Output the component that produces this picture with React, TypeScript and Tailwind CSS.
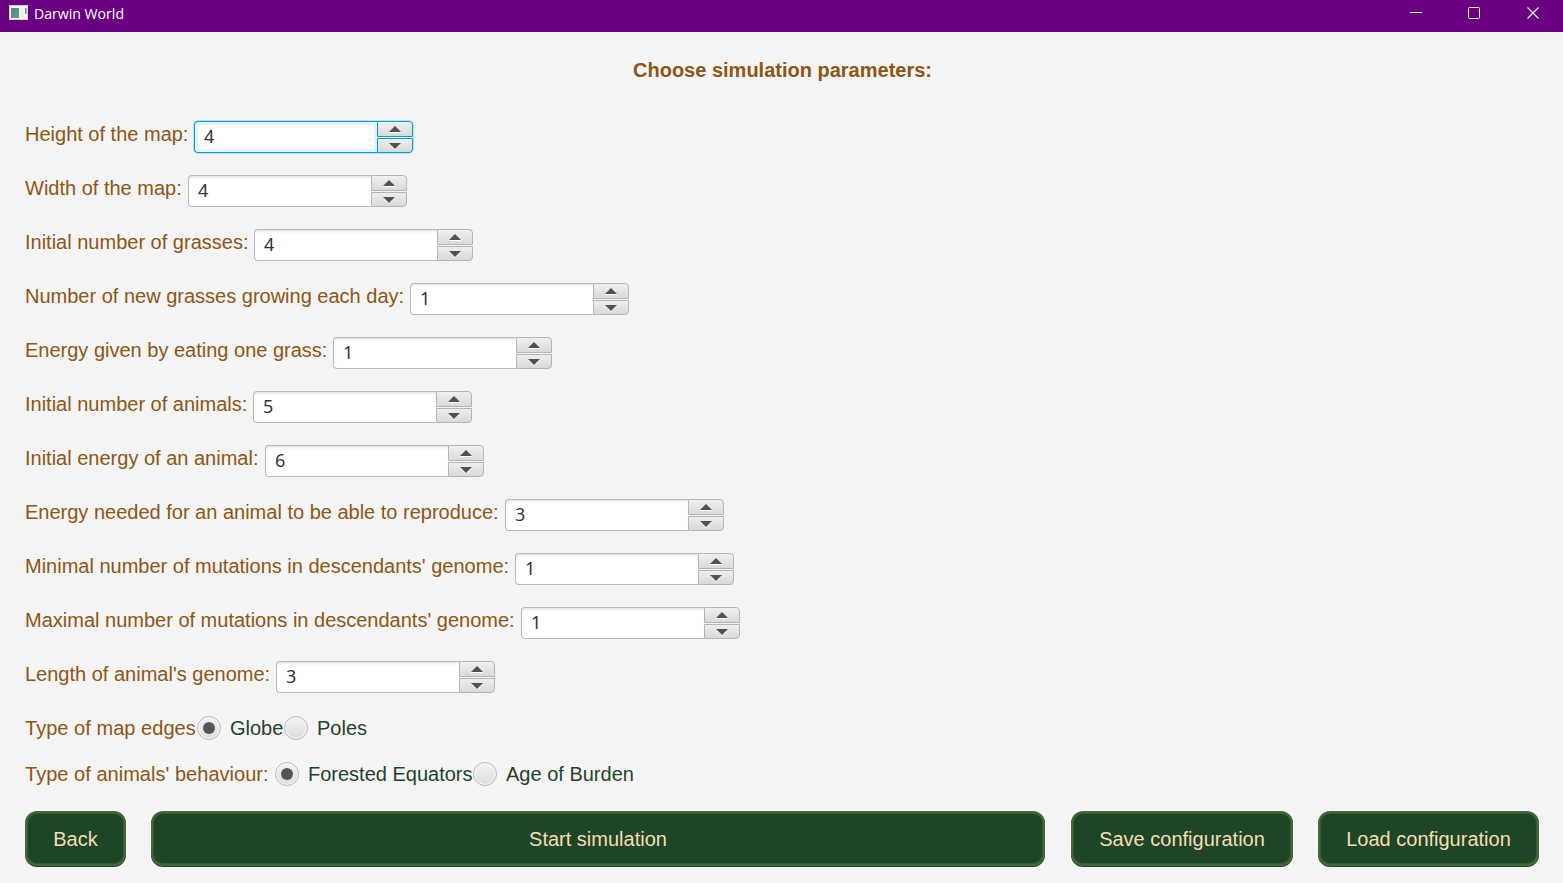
import { useState } from "react";

type Field = { label: string; value: number; width: string };

const fields: Field[] = [
  { label: "Height of the map:", value: 4, width: "w-[169px]" },
  { label: "Width of the map:", value: 4, width: "w-[163px]" },
  { label: "Initial number of grasses:", value: 4, width: "w-[229px]" },
  { label: "Number of new grasses growing each day:", value: 1, width: "w-[385px]" },
  { label: "Energy given by eating one grass:", value: 1, width: "w-[308px]" },
  { label: "Initial number of animals:", value: 5, width: "w-[228px]" },
  { label: "Initial energy of an animal:", value: 6, width: "w-[240px]" },
  { label: "Energy needed for an animal to be able to reproduce:", value: 3, width: "w-[480px]" },
  { label: "Minimal number of mutations in descendants' genome:", value: 1, width: "w-[490px]" },
  { label: "Maximal number of mutations in descendants' genome:", value: 1, width: "w-[496px]" },
  { label: "Length of animal's genome:", value: 3, width: "w-[251px]" },
];

function Arrow({ down = false }: { down?: boolean }) {
  return (
    <svg width="12" height="7" viewBox="0 0 12 7" aria-hidden="true">
      {down ? (
        <>
          <path d="M0 1h12L6 7z" fill="#fff" />
          <path d="M0 0h12L6 6z" fill="#515151" />
        </>
      ) : (
        <>
          <path d="M0 6h12v1H0z" fill="#fff" />
          <path d="M0 6h12L6 0z" fill="#515151" />
        </>
      )}
    </svg>
  );
}

function Spinner({ initial, focused }: { initial: number; focused: boolean }) {
  const [value, setValue] = useState(initial);
  const edge = focused ? "border-[#039ed3]" : "border-[#b5b5b5]";
  return (
    <div
      className={`flex h-8 w-[219px] rounded-[4px] ${focused ? "shadow-[0_0_0_1px_#b9e0ee]" : ""}`}
    >
      <div
        className={`flex h-8 w-[183px] items-center rounded-l-[4px] border border-r-0 bg-white pb-[2px] pl-[9px] font-['Noto_Sans',sans-serif] text-[18px] leading-none text-[#333] ${
          focused
            ? "border-[#039ed3] shadow-[inset_0_0_0_3px_#e3f3f9]"
            : "border-[#bababa] shadow-[inset_0_3px_3px_-2px_#d9d9d9]"
        }`}
      >
        {value}
      </div>
      <div className="flex w-9 flex-col justify-between">
        <button
          aria-label="Increase"
          onClick={() => setValue(value + 1)}
          className={`flex h-4 items-center justify-center rounded-tr-[4px] border bg-linear-to-b from-[#f0f0f0] to-[#dadada] ${edge}`}
        >
          <Arrow />
        </button>
        <button
          aria-label="Decrease"
          onClick={() => setValue(value - 1)}
          className={`flex h-[15px] items-center justify-center rounded-br-[4px] border bg-linear-to-b from-[#eeeeee] to-[#d9d9d9] pt-[2px] ${edge}`}
        >
          <Arrow down />
        </button>
      </div>
    </div>
  );
}

function RadioRow({
  label,
  width,
  firstWidth,
  options,
}: {
  label: string;
  width: string;
  firstWidth: string;
  options: [string, string];
}) {
  const [selected, setSelected] = useState(0);
  return (
    <div className="flex h-6 items-center">
      <span className={`shrink-0 ${width}`}>{label}</span>
      {options.map((option, i) => (
        <button
          key={option}
          role="radio"
          aria-checked={selected === i}
          onClick={() => setSelected(i)}
          className={`flex shrink-0 items-center gap-[9px] text-[#1e4428] ${i === 0 ? firstWidth : ""}`}
        >
          <span className="flex size-6 shrink-0 items-center justify-center rounded-full border border-[#bababa] bg-linear-to-b from-[#f2f2f2] to-[#dddddd] shadow-[inset_0_0_0_1px_#f8f8f8]">
            {selected === i && <span className="size-3 rounded-full bg-[#555]" />}
          </span>
          {option}
        </button>
      ))}
    </div>
  );
}

function ActionButton({ label, size }: { label: string; size: string }) {
  return (
    <button
      className={`h-[55px] shrink-0 rounded-[12px] border-2 border-[#46673c] bg-[#1f4528] text-[#f5deb3] shadow-[0_1px_0_#1f4528,inset_0_0_0_1px_#355a32] ${size}`}
    >
      {label}
    </button>
  );
}

export default function App() {
  return (
    <div className="flex h-[883px] w-[1563px] flex-col overflow-hidden bg-[#f4f4f4] font-['Liberation_Sans',Arial,sans-serif] text-[20px] leading-6 whitespace-nowrap text-[#8b5714]">
      <header className="flex h-8 shrink-0 items-start justify-between bg-[#6a0080] text-white">
        <div className="flex h-7 items-center gap-[6px] pl-[9px]">
          <svg width="19" height="15" viewBox="0 0 19 15" className="-mt-[3px]" aria-hidden="true">
            <defs>
              <linearGradient id="pane" x2="1" y2="1">
                <stop stopColor="#4f83a8" />
                <stop offset="1" stopColor="#58a86a" />
              </linearGradient>
            </defs>
            <path d="M0 0h19v15H0z" fill="#d5cfd7" />
            <path d="M1 1h17v13H1z" fill="#f5f5f5" />
            <path d="M2 3h8v10H2z" fill="url(#pane)" />
            <path d="M11 3h4v10h-4z" fill="#eeeeee" />
            <path d="M16 3h1.5v6H16z" fill="#5a9a86" />
          </svg>
          <span className="font-['Open_Sans',sans-serif] text-[14.1px] leading-5">Darwin World</span>
        </div>
        <div className="flex h-[26px] items-center pr-[24px]">
          <svg width="12" height="12" viewBox="0 0 12 12" aria-hidden="true">
            <path d="M0 5.5h12" stroke="white" />
          </svg>
          <svg width="12" height="12" viewBox="0 0 12 12" className="ml-[46px]" aria-hidden="true">
            <rect x=".5" y=".5" width="11" height="11" rx="1" fill="none" stroke="white" />
          </svg>
          <svg width="12" height="12" viewBox="0 0 12 12" className="ml-[47px]" aria-hidden="true">
            <path d="m.5.5 11 11m0-11-11 11" stroke="white" strokeWidth="1.1" />
          </svg>
        </div>
      </header>
      <main className="flex flex-1 flex-col px-[25px] pt-[26px]">
        <h1 className="pl-[2px] text-center font-bold">Choose simulation parameters:</h1>
        <div className="mt-[39px] flex flex-col gap-[22px]">
          {fields.map((f, i) => (
            <div key={f.label} className="flex h-8 items-start">
              <label className={`shrink-0 pt-px ${f.width}`}>{f.label}</label>
              <Spinner initial={f.value} focused={i === 0} />
            </div>
          ))}
        </div>
        <div className="mt-[23px] flex flex-col gap-[22px]">
          <RadioRow label="Type of map edges" width="w-[172px] tracking-[0.04px]" firstWidth="w-[87px]" options={["Globe", "Poles"]} />
          <RadioRow
            label="Type of animals' behaviour:"
            width="w-[250px] tracking-[0.03px]"
            firstWidth="w-[198px]"
            options={["Forested Equators", "Age of Burden"]}
          />
        </div>
        <div className="mt-[25px] flex">
          <ActionButton label="Back" size="w-[101px]" />
          <ActionButton label="Start simulation" size="ml-[25px] w-[894px]" />
          <ActionButton label="Save configuration" size="ml-[26px] w-[222px]" />
          <ActionButton label="Load configuration" size="ml-[25px] w-[221px]" />
        </div>
      </main>
    </div>
  );
}
